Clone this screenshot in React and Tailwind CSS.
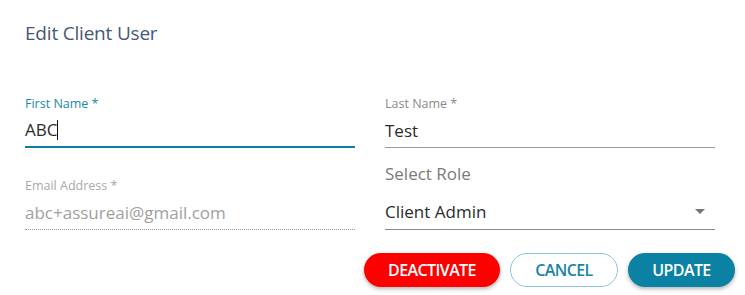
import React from "react";

const Field = ({ label, value, focused, disabled }) => {
  let line = "border-b border-[#9a9a9a]";
  if (focused) line = "border-b-2 border-[#0b7fa2]";
  if (disabled) line = "border-b border-dotted border-[#9a9a9a]";
  return (
    <div className="flex flex-col">
      <label
        className={`text-[12.5px] leading-[16px] ${
          focused ? "text-[#1a8aac]" : disabled ? "text-[#a8a8a8]" : "text-[#8a8a8a]"
        }`}
      >
        {label}
      </label>
      <div
        className={`mt-[4px] flex items-center h-[32px] pb-[2px] text-[17px] ${
          disabled ? "text-[#a0a0a0]" : "text-[#2b2b2b]"
        } ${line}`}
      >
        <span>{value}</span>
        {focused && <span className="w-px h-[20px] bg-[#111]" />}
      </div>
    </div>
  );
};

const btn = "h-[34px] rounded-full text-[16px] font-semibold tracking-[-0.6px]";

const App = () => {
  return (
    <div className="w-[745px] h-[295px] bg-white font-['Open_Sans',sans-serif] pl-[25px] pr-[30px] pt-[20px]">
      <h2 className="text-[19px] leading-[26px] text-[#475775] tracking-[-0.2px]">Edit Client User</h2>

      <div className="grid grid-cols-[330px_330px] gap-x-[30px] mt-[50px]">
        <Field label="First Name *" value="ABC" focused />
        <Field label="Last Name *" value="Test" />

        <div className="mt-[30px]">
          <Field label="Email Address *" value="abc+assureai@gmail.com" disabled />
        </div>
        <div className="mt-[15px] flex flex-col">
          <span className="text-[17px] leading-[22px] text-[#7a7a7a]">Select Role</span>
          <div className="mt-[12px] flex items-center justify-between border-b border-[#8a8a8a] h-[33px] pb-[3px] text-[17px] text-[#2b2b2b]">
            <span>Client Admin</span>
            <svg width="10" height="5" viewBox="0 0 10 5" className="mr-[10px]">
              <path d="M0 0 L10 0 L5 5 Z" fill="#757575" />
            </svg>
          </div>
        </div>
      </div>

      <div className="flex justify-end gap-[10px] mt-[23px] -mr-[20px]">
        <button className={`${btn} w-[136px] bg-[#ff0000] text-white shadow-[0_2px_4px_rgba(0,0,0,0.3)]`}>
          DEACTIVATE
        </button>
        <button className={`${btn} w-[108px] border border-[#8cc6d6] bg-white text-[#1a84a4]`}>
          CANCEL
        </button>
        <button className={`${btn} w-[107px] bg-[#0b81a3] text-white shadow-[0_2px_4px_rgba(0,0,0,0.3)]`}>
          UPDATE
        </button>
      </div>
    </div>
  );
};

export default App;
